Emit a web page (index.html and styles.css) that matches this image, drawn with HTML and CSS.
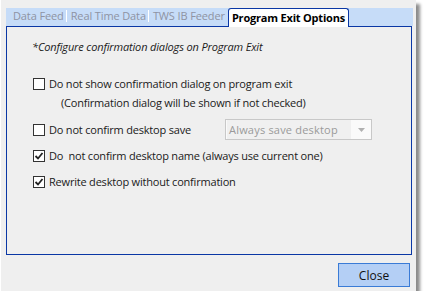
FILE: index.html
```html
<!DOCTYPE html>
<html>
<head>
<meta charset="utf-8">
<link rel="stylesheet" href="styles.css">
</head>
<body>
<div class="window">
  <div class="tabstrip">
    <span class="tab">Data Feed</span><span class="sep"></span>
    <span class="tab">Real Time Data</span><span class="sep"></span>
    <span class="tab">TWS IB Feeder</span>
    <span class="tab tab-active">Program Exit Options</span>
  </div>
  <div class="panel">
    <div class="hint">*Configure confirmation dialogs on Program Exit</div>
    <div class="row row1">
      <span class="cb"></span><span class="lbl">Do not show confirmation dialog on program exit</span>
    </div>
    <div class="note">(Confirmation dialog will be shown if not checked)</div>
    <div class="row row2">
      <span class="cb"></span><span class="lbl">Do not confirm desktop save</span>
      <div class="combo"><span class="combo-text">Always save desktop</span><span class="combo-btn"><svg width="7" height="4" viewBox="0 0 7 4"><path d="M0 0H7L3.5 4Z" fill="#b0b0b0"/></svg></span></div>
    </div>
    <div class="row row3">
      <span class="cb checked"><svg width="10" height="10" viewBox="0 0 10 10"><path d="M1.5 5 L4 7.5 L8.5 2" fill="none" stroke="#222" stroke-width="1.8"/></svg></span><span class="lbl">Do&nbsp; not confirm desktop name (always use current one)</span>
    </div>
    <div class="row row4">
      <span class="cb checked"><svg width="10" height="10" viewBox="0 0 10 10"><path d="M1.5 5 L4 7.5 L8.5 2" fill="none" stroke="#222" stroke-width="1.8"/></svg></span><span class="lbl">Rewrite desktop without confirmation</span>
    </div>
  </div>
  <div class="footer">
    <button class="btn">Close</button>
  </div>
</div>
</body>
</html>
```
FILE: styles.css
```css
html, body {
  margin: 0;
  padding: 0;
  background: #ffffff;
}
body {
  font-family: "Open Sans", "Noto Sans", sans-serif;
  font-size: 11px;
  letter-spacing: -0.2px;
  color: #1a1a1a;
}
.window {
  margin-left: 1px;
  width: 415px;
  height: 291px;
  background: #efefef;
  box-shadow: 4px 4px 3px rgba(0, 0, 0, 0.45);
  padding-top: 8px;
  box-sizing: border-box;
  display: flex;
  flex-direction: column;
}
.tabstrip {
  margin: 0 3px 0 5px;
  height: 18px;
  background: #c6dcf8;
  display: flex;
  align-items: flex-end;
  padding-left: 7px;
  position: relative;
}
.tab {
  color: #8e93a3;
  letter-spacing: -0.12px;
  line-height: 16px;
  height: 16px;
  white-space: nowrap;
  padding-bottom: 2px;
}
.sep {
  width: 1px;
  height: 12px;
  background: #ffffff;
  margin: 0 4px 4px 2px;
  align-self: flex-end;
}
.tab-active {
  color: #000;
  font-weight: bold;
  letter-spacing: -0.2px;
  background: #ffffff;
  border: 1px solid #0a37a5;
  border-bottom: none;
  border-radius: 3px 3px 0 0;
  height: 18px;
  line-height: 17px;
  padding: 0 3px 0 3px;
  margin-left: 3px;
  margin-bottom: -1px;
  position: relative;
  z-index: 1;
}
.panel {
  margin: 0 4px 0 5px;
  height: 229px;
  box-sizing: border-box;
  border: 1px solid #0a37a5;
  padding: 12px 0 0 26px;
}
.hint {
  font-style: italic;
  letter-spacing: -0.15px;
  line-height: 16px;
  margin-left: -1px;
}
.row {
  display: flex;
  align-items: center;
  height: 16px;
  line-height: 16px;
}
.row1 { margin-top: 21px; }
.note { margin: 3px 0 0 28px; line-height: 16px; }
.row2 { margin-top: 8px; height: 21px; }
.row3 { margin-top: 8px; }
.row4 { margin-top: 10px; }
.cb {
  width: 10px;
  height: 10px;
  border: 1px solid #333;
  background: #fff;
  margin-right: 4px;
  flex: none;
  display: flex;
  align-items: center;
  justify-content: center;
}
.lbl { white-space: nowrap; }
.combo {
  margin-left: auto;
  margin-right: 39px;
  width: 147px;
  flex: none;
  height: 21px;
  box-sizing: border-box;
  border: 1px solid #c8c8c8;
  background: #fafafa;
  display: flex;
  align-items: center;
}
.combo-text {
  flex: 1;
  height: 19px;
  line-height: 19px;
  padding-left: 2px;
  color: #9a9a9a;
  background: #f0f0f0;
  letter-spacing: 0.2px;
  margin-left: 1px;
}
.combo-btn {
  width: 20px;
  display: flex;
  justify-content: center;
  align-items: center;
}
.footer {
  display: flex;
  justify-content: flex-end;
  padding: 8px 6px 0 0;
}
.btn {
  width: 72px;
  height: 24px;
  background: #b4cff5;
  border: 1px solid #3a7bd6;
  font-family: inherit;
  font-size: 12px;
  color: #111;
  padding: 0;
}
```
